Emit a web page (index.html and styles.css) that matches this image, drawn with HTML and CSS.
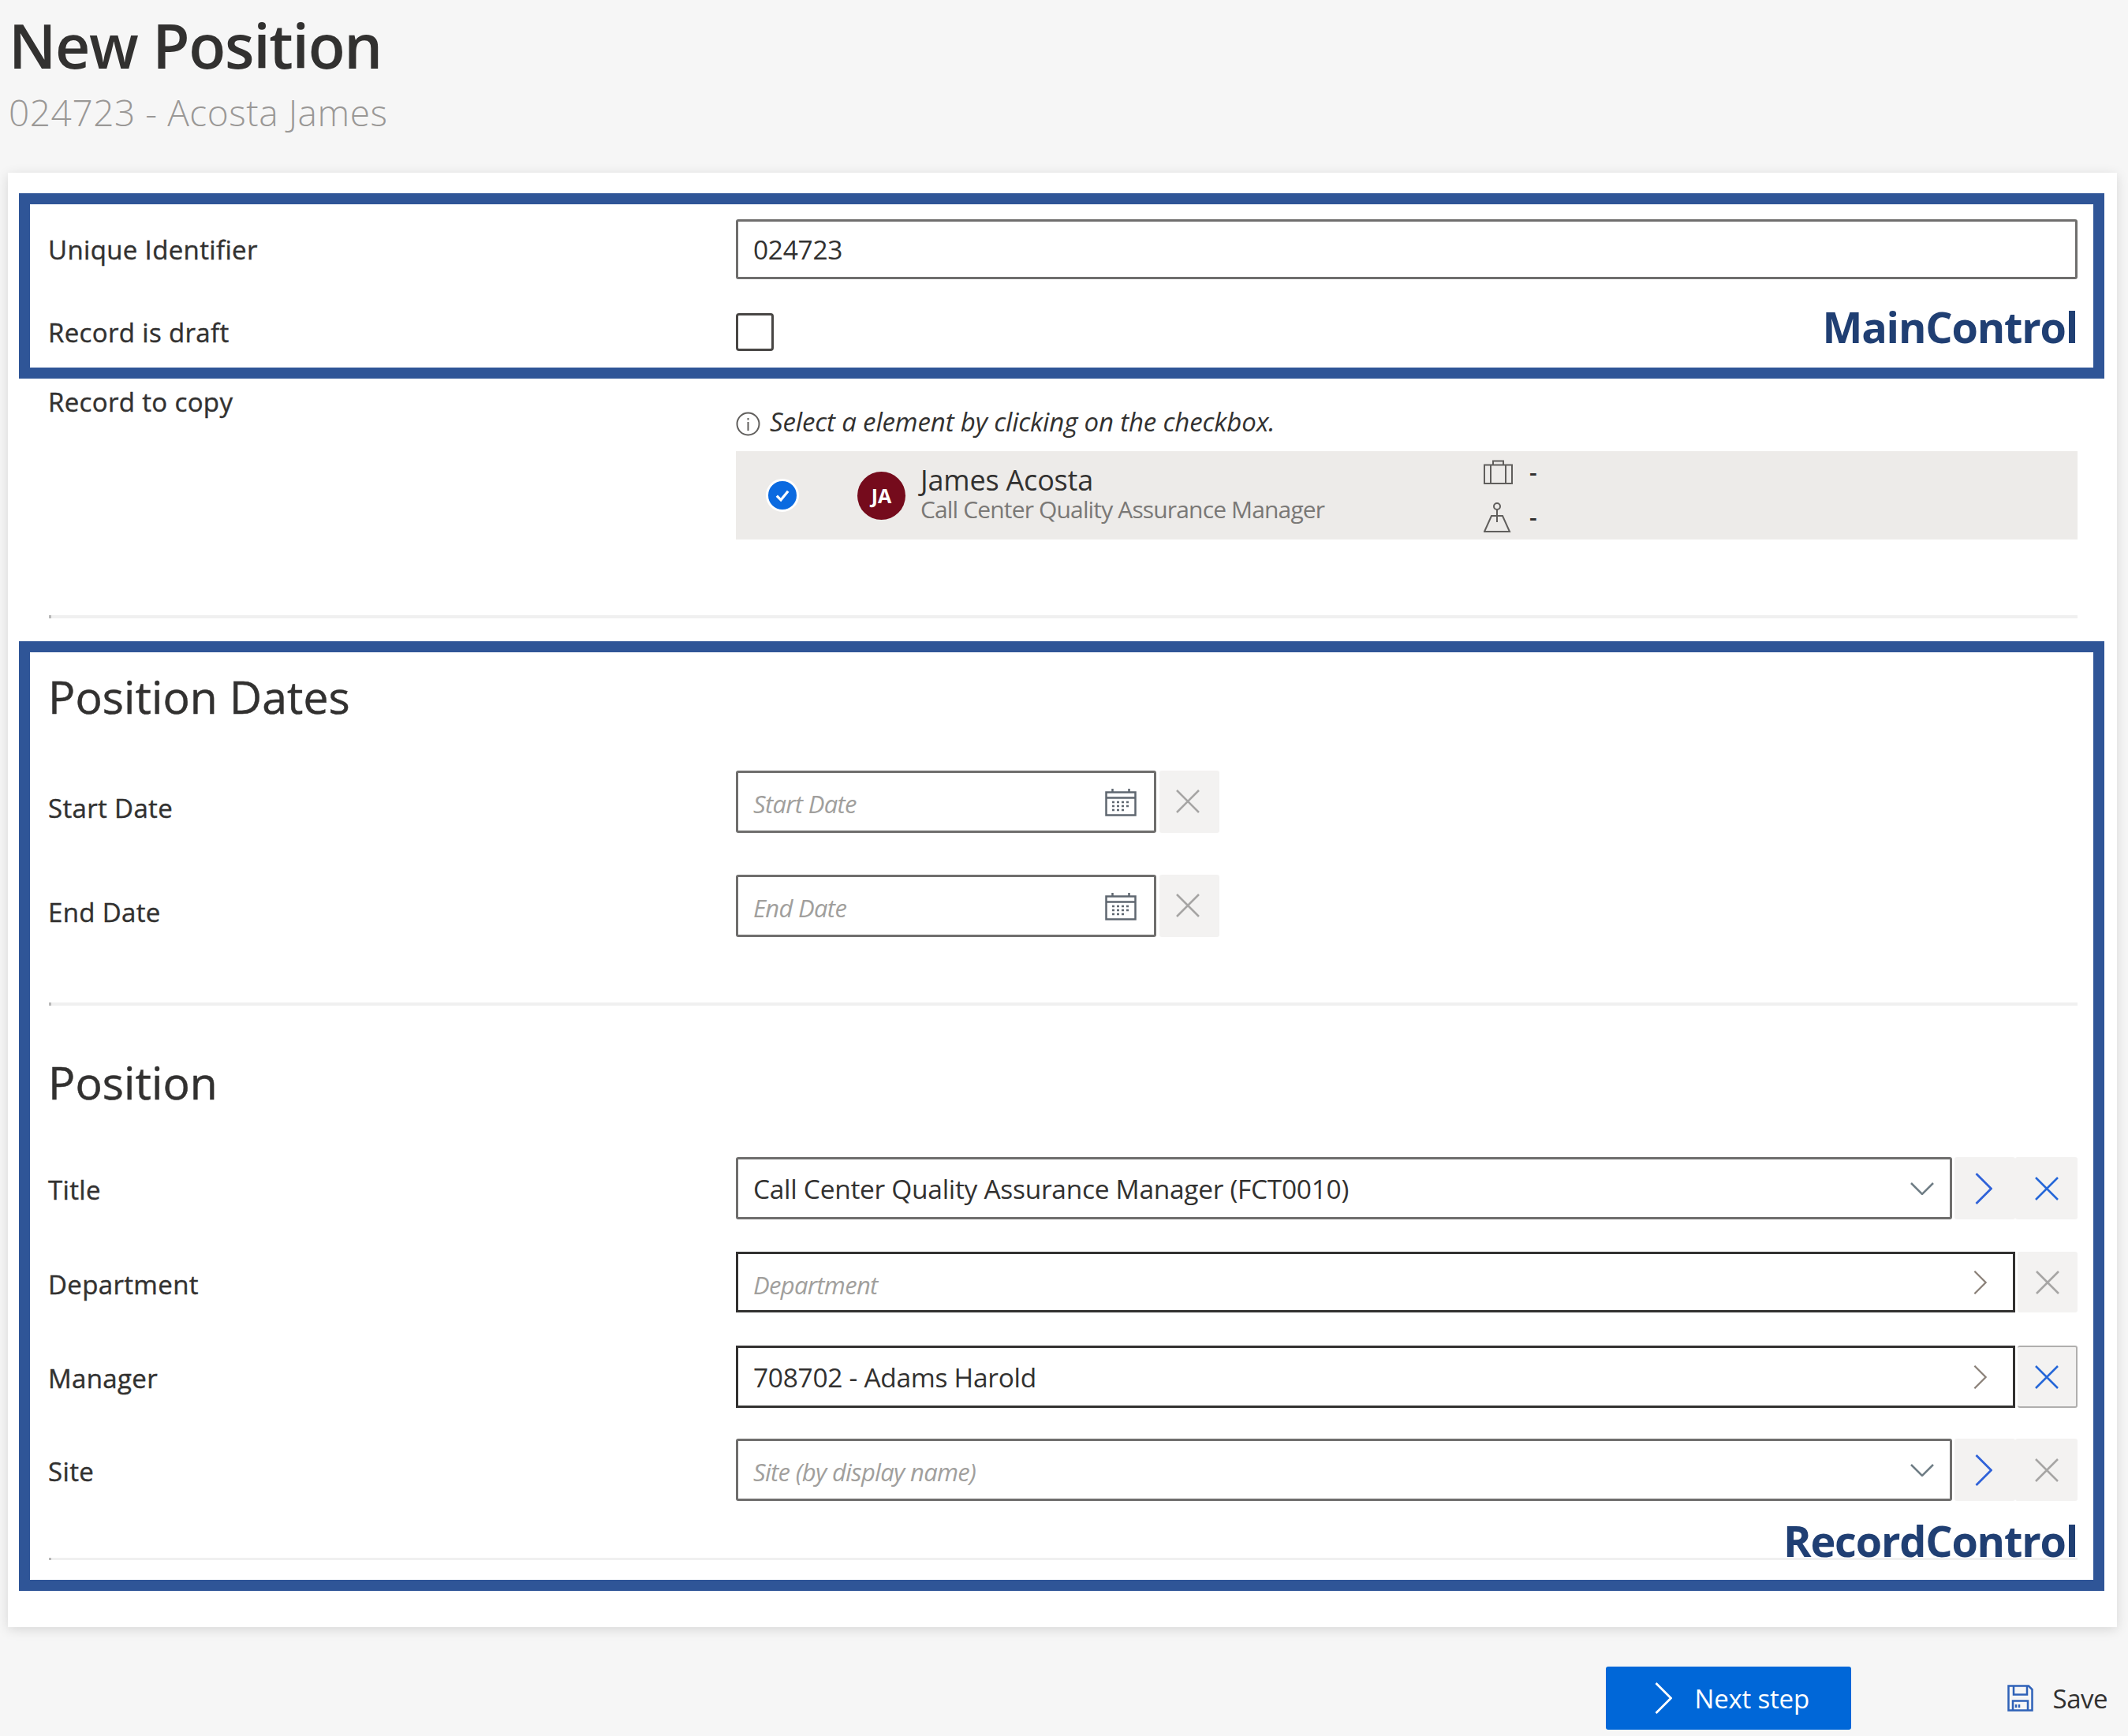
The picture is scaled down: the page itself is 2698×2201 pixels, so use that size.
FILE: index.html
```html
<!DOCTYPE html>
<html>
<head>
	<meta charset="utf-8" />
	<title>New Position</title>
	<link rel="stylesheet" href="styles.css">
</head>
<body>
	<svg class="sprite" width="0" height="0">
		<symbol id="i-x" viewBox="0 0 30 30"><path d="M1 1L29 29M29 1L1 29" /></symbol>
		<symbol id="i-right" viewBox="0 0 22 40"><path d="M1.500 1L20.500 20L1.500 39" /></symbol>
		<symbol id="i-down" viewBox="0 0 30 16"><path d="M1 1L15 15L29 1" /></symbol>
		<symbol id="i-cal" viewBox="0 0 40 36">
			<path d="M1.500 5.500H38.500V34.500H1.500ZM1.500 12.500H38.500M9.500 1V5.500M30.500 1V5.500" />
			<path class="dots" d="M9 18h3M15 18h3M21 18h3M27 18h3M9 23h3M15 23h3M21 23h3M27 23h3M9 28h3M15 28h3M21 28h3" />
		</symbol>
	</svg>

	<div class="page-head">
		<h1>New Position</h1>
		<p class="subtitle">024723 - Acosta James</p>
	</div>

	<div class="card">
		<div class="frame frame-main">
			<div class="row">
				<label>Unique Identifier</label>
				<div class="field field-full">024723</div>
			</div>
			<div class="row row-draft">
				<label>Record is draft</label>
				<div class="checkbox"></div>
			</div>
			<div class="tag tag-main">MainControl</div>
		</div>

		<div class="copy-section">
			<div class="copy-grid">
				<label class="copy-label">Record to copy</label>
				<div>
					<p class="hint">
						<svg class="hint-icon" viewBox="0 0 31 31"><circle cx="15.500" cy="15.500" r="14" /><path d="M15.500 13V24M15.500 8V10.500" /></svg>
						<span class="hint-text">Select a element by clicking on the checkbox.</span>
					</p>
					<div class="record">
						<span class="check">
							<svg viewBox="0 0 20 20"><path d="M4.500 10.500L8.500 14.500L15.500 6" /></svg>
						</span>
						<span class="avatar">JA</span>
						<div class="person">
							<div class="person-name">James Acosta</div>
							<div class="person-job">Call Center Quality Assurance Manager</div>
						</div>
						<div class="facts">
							<div class="fact">
								<svg class="fact-icon" viewBox="0 0 37 31"><path d="M1 6.500H36V30H1ZM9 6.500V30M28 6.500V30M12 6.500V1.500H25V6.500" /></svg>
								<span>-</span>
							</div>
							<div class="fact">
								<svg class="fact-icon fact-icon-org" viewBox="0 0 37 38"><circle cx="17" cy="5" r="4" /><path d="M17 9V17M10 17H24L33 37H1ZM17 17V25" /></svg>
								<span>-</span>
							</div>
						</div>
					</div>
				</div>
			</div>
			<div class="divider"></div>
		</div>

		<div class="frame frame-record">
			<h2>Position Dates</h2>
			<div class="row row-date">
				<label>Start Date</label>
				<div class="control">
					<div class="field field-date">
						<span class="placeholder">Start Date</span>
						<svg class="cal"><use href="#i-cal" /></svg>
					</div>
					<div class="btn-clear btn-date"><svg class="x"><use href="#i-x" /></svg></div>
				</div>
			</div>
			<div class="row row-date row-date-next">
				<label>End Date</label>
				<div class="control">
					<div class="field field-date">
						<span class="placeholder">End Date</span>
						<svg class="cal"><use href="#i-cal" /></svg>
					</div>
					<div class="btn-clear btn-date"><svg class="x"><use href="#i-x" /></svg></div>
				</div>
			</div>
			<div class="divider divider-dates"></div>

			<h2 class="h-position">Position</h2>
			<div class="row row-title">
				<label>Title</label>
				<div class="control">
					<div class="field field-grow">
						<span>Call Center Quality Assurance Manager (FCT0010)</span>
						<svg class="down"><use href="#i-down" /></svg>
					</div>
					<div class="btn-go"><svg class="go"><use href="#i-right" /></svg></div>
					<div class="btn-clear btn-joined"><svg class="x x-blue"><use href="#i-x" /></svg></div>
				</div>
			</div>
			<div class="row row-dept">
				<label>Department</label>
				<div class="control">
					<div class="field field-grow field-dark field-short">
						<span class="placeholder">Department</span>
						<svg class="next"><use href="#i-right" /></svg>
					</div>
					<div class="btn-clear btn-short"><svg class="x"><use href="#i-x" /></svg></div>
				</div>
			</div>
			<div class="row row-manager">
				<label>Manager</label>
				<div class="control">
					<div class="field field-grow field-dark">
						<span>708702 - Adams Harold</span>
						<svg class="next"><use href="#i-right" /></svg>
					</div>
					<div class="btn-clear btn-outlined"><svg class="x x-blue"><use href="#i-x" /></svg></div>
				</div>
			</div>
			<div class="row row-site">
				<label>Site</label>
				<div class="control">
					<div class="field field-grow">
						<span class="placeholder">Site (by display name)</span>
						<svg class="down"><use href="#i-down" /></svg>
					</div>
					<div class="btn-go"><svg class="go"><use href="#i-right" /></svg></div>
					<div class="btn-clear btn-joined"><svg class="x"><use href="#i-x" /></svg></div>
				</div>
			</div>
			<div class="divider divider-end"></div>
			<div class="tag tag-record">RecordControl</div>
		</div>
	</div>

	<div class="actions">
		<div class="btn-next">
			<svg class="next-icon"><use href="#i-right" /></svg>
			<span>Next step</span>
		</div>
		<div class="save">
			<svg class="save-icon" viewBox="0 0 33 34"><path d="M1.500 1.500H27L31.500 6V32.500H1.500ZM8 1.500V12.500H25V1.500M7 32.500V20.500H26V32.500M11 25V29M15 25V29" /></svg>
			<span>Save</span>
		</div>
	</div>
</body>
</html>
```

FILE: styles.css
```css
*{
	box-sizing: border-box;
}
body{
	margin: 0;
	width: 2698px;
	height: 2201px;
	overflow: hidden;
	background-color: #f6f6f6;
	color: #323130;
	font-family: "Open Sans", "Liberation Sans", sans-serif;
	font-size: 33px;
}
p,h1,h2{
	margin: 0;
}
.sprite{
	position: absolute;
}
svg{
	display: block;
	fill: none;
	stroke: currentColor;
}

/* head */
.page-head{
	height: 219px;
	padding: 13px 0 0 11px;
}
h1{
	font-size: 77px;
	line-height: 90px;
	font-weight: 600;
	letter-spacing: -1.300px;
}
.subtitle{
	margin-top: 14px;
	font-size: 46px;
	line-height: 50px;
	font-weight: 300;
	color: #9a9896;
	letter-spacing: 0.550px;
}

/* card and the blue frames */
.card{
	width: 2674px;
	height: 1844px;
	margin-left: 10px;
	padding: 26px 16px 0 14px;
	background-color: #fff;
	box-shadow: 0 3px 14px rgba(0,0,0,0.13);
}
.frame{
	position: relative;
	border: 14px solid #2f5597;
	padding: 0 20px 0 24px;
}
.frame-main{
	height: 235px;
	padding-top: 19px;
}
.frame-record{
	height: 1204px;
	padding-top: 16px;
}
.tag{
	position: absolute;
	right: 20px;
	font-size: 54px;
	line-height: 60px;
	font-weight: 700;
	color: #203f73;
	letter-spacing: -1.200px;
}
.tag-main{
	bottom: 22px;
}
.tag-record{
	bottom: 20px;
}

/* rows */
.row{
	display: grid;
	grid-template-columns: 871px 1fr;
	align-items: center;
}
label{
	margin-left: -1px;
	font-size: 33px;
	font-weight: 500;
	letter-spacing: 0.350px;
	-webkit-text-stroke: 0.400px #323130;
}
.row-draft{
	margin-top: 43px;
}
.row-date{
	margin-top: 54px;
}
.row-date label{
	padding-top: 15px;
}
.row-date-next{
	margin-top: 53px;
}
.row-title{
	margin-top: 55px;
}
.row-title label,.row-dept label,.row-manager label,.row-site label{
	padding-top: 3px;
}
.row-dept{
	margin-top: 41px;
}
.row-manager{
	margin-top: 40px;
}
.row-site{
	margin-top: 39px;
}
h2{
	margin-left: -1px;
	font-size: 57px;
	line-height: 80px;
	font-weight: 500;
	letter-spacing: 0.100px;
	-webkit-text-stroke: 0.500px #323130;
}
.h-position{
	margin-top: 57px;
}

/* inputs */
.control{
	display: flex;
	height: 79px;
}
.field{
	display: flex;
	align-items: center;
	justify-content: space-between;
	height: 79px;
	padding: 0 19px;
	border: 3px solid #6f6e6d;
	border-radius: 3px;
	background-color: #fff;
	font-size: 33.500px;
	letter-spacing: -0.300px;
}
.field-full{
	height: 76px;
}
.field-date{
	width: 533px;
	padding-right: 22px;
}
.field-grow{
	flex: 1;
	padding-right: 20px;
}
.field-dark{
	border-color: #323130;
	border-radius: 0;
}
.field-short{
	height: 77px;
}
.placeholder{
	padding-top: 4px;
	font-size: 31px;
	font-style: italic;
	color: #a19f9d;
	letter-spacing: -0.700px;
}
.field-short .placeholder{
	padding-top: 6px;
}
.checkbox{
	width: 48px;
	height: 48px;
	border: 3px solid #484644;
	border-radius: 4px;
}
.btn-clear,.btn-go{
	display: flex;
	align-items: center;
	justify-content: center;
	width: 76px;
	margin-left: 4px;
	background-color: #f3f2f1;
	border-radius: 3px;
}
.btn-date{
	padding: 0 4px 2px 0;
}
.btn-go{
	width: 77px;
	margin-left: 3px;
	padding-right: 3px;
}
.btn-joined{
	width: 79px;
	margin-left: 0;
}
.btn-short{
	height: 77px;
	margin-left: 3px;
}
.btn-outlined{
	margin-left: 3px;
	border: 2px solid #b0afae;
	border-left: none;
}
.x{
	width: 30px;
	height: 30px;
	color: #a6a5a4;
	stroke-width: 2.500;
}
.x-blue{
	color: #2567d8;
}
.go{
	width: 22px;
	height: 40px;
	color: #2f62d8;
	stroke-width: 2.800;
}
.next{
	width: 19px;
	height: 30px;
	margin-right: 12px;
	color: #8a8078;
	stroke-width: 3;
}
.down{
	width: 30px;
	height: 16px;
	margin-right: 0;
	color: #6f7d85;
	stroke-width: 2.500;
}
.cal{
	width: 40px;
	height: 36px;
	color: #5f6770;
	stroke-width: 2.500;
}
.cal .dots{
	stroke-width: 2;
}

/* record to copy */
.copy-section{
	height: 333px;
	padding: 0 34px 0 38px;
}
.copy-grid{
	display: grid;
	grid-template-columns: 871px 1fr;
}
.copy-label{
	padding-top: 10px;
	line-height: 40px;
}
.hint{
	display: flex;
	align-items: center;
	gap: 12px;
	height: 31px;
	margin-top: 42px;
	font-size: 33px;
	font-style: italic;
	letter-spacing: -0.150px;
}
.hint-icon{
	width: 31px;
	height: 31px;
	color: #605e5c;
	stroke-width: 2;
}
.hint-text{
	margin-top: -6px;
}
.record{
	display: flex;
	align-items: center;
	height: 112px;
	margin-top: 19px;
	padding-left: 38px;
	background-color: #edebe9;
}
.check{
	display: flex;
	align-items: center;
	justify-content: center;
	width: 42px;
	height: 42px;
	border: 3px solid #fff;
	border-radius: 50%;
	background-color: #0b6ae0;
}
.check svg{
	width: 26px;
	height: 26px;
	color: #fff;
	stroke-width: 2.500;
}
.avatar{
	display: flex;
	align-items: center;
	justify-content: center;
	width: 61px;
	height: 61px;
	margin-left: 74px;
	border-radius: 50%;
	background-color: #750b1c;
	color: #fff;
	font-size: 25px;
	font-weight: 700;
}
.person{
	width: 716px;
	margin-left: 19px;
	margin-top: -6px;
}
.person-name{
	font-size: 36px;
	line-height: 42px;
	letter-spacing: -0.200px;
}
.person-job{
	font-size: 30px;
	line-height: 32px;
	color: #7a7876;
	letter-spacing: -0.850px;
}
.facts{
	display: flex;
	flex-direction: column;
	gap: 24px;
	margin-top: -2px;
	margin-left: -2px;
}
.fact{
	display: flex;
	align-items: center;
	gap: 21px;
	height: 33px;
	font-size: 30px;
	font-weight: 600;
}
.fact-icon{
	width: 37px;
	height: 33px;
	color: #605e5c;
	stroke-width: 2;
}
.fact-icon-org{
	height: 38px;
}
.divider{
	height: 4px;
	margin-top: 96px;
	background-color: #f0f0f0;
	border-left: 3px solid #b8b8b8;
}
.divider-dates{
	margin-top: 83px;
}
.divider-end{
	height: 3px;
	margin-top: 72px;
}

/* bottom bar */
.actions{
	display: flex;
	align-items: center;
	justify-content: flex-end;
	height: 80px;
	margin-top: 50px;
	padding-right: 26px;
}
.btn-next{
	display: flex;
	align-items: center;
	gap: 29px;
	width: 311px;
	height: 80px;
	padding-left: 62px;
	background-color: #0067d8;
	border-radius: 3px;
	color: #fff;
	font-size: 33px;
	font-weight: 500;
	letter-spacing: -0.200px;
}
.next-icon{
	width: 22px;
	height: 40px;
	stroke-width: 2.800;
}
.save{
	display: flex;
	align-items: center;
	gap: 25px;
	margin-left: 198px;
	font-size: 33px;
	letter-spacing: -0.500px;
}
.save-icon{
	width: 33px;
	height: 34px;
	color: #2f62b8;
	stroke-width: 2.500;
}
```
